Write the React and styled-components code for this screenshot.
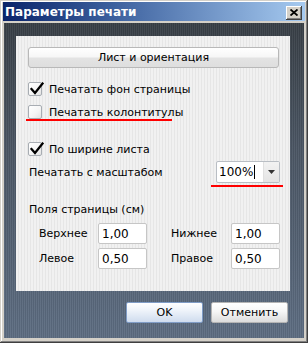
import React from "react";
import styled, { createGlobalStyle } from "styled-components";

const Global = createGlobalStyle`
  html, body { margin: 0; padding: 0; background: #d4d0c8; }
  body { font-family: "DejaVu Sans", Tahoma, sans-serif; font-size: 11px; color: #000; }
`;

const Window = styled.div`
  width: 308px;
  height: 343px;
  box-sizing: border-box;
  background: #d4d0c8;
  padding: 2px 3px 0 3px;
  display: flex;
  flex-direction: column;
  box-shadow: inset -1px -1px 0 #404040, inset 1px 1px 0 #d4d0c8, inset -2px -2px 0 #808080, inset 2px 2px 0 #ffffff;
`;

const TitleBar = styled.div`
  height: 19px;
  flex: none;
  display: flex;
  align-items: center;
  padding-left: 2px;
  padding-right: 3px;
  background: linear-gradient(90deg, #0a246a 0%, #3a5e9c 35%, #a6caf0 100%);
`;

const Title = styled.div`
  flex: 1;
  color: #fff;
  font-weight: bold;
  font-size: 12px;
`;

const CloseBtn = styled.div`
  width: 16px;
  height: 14px;
  box-sizing: border-box;
  margin-top: 2px;
  background: #d4d0c8;
  box-shadow: inset -1px -1px 0 #404040, inset 1px 1px 0 #ffffff, inset -2px -2px 0 #808080;
  display: flex;
  align-items: center;
  justify-content: center;
`;

const Frame = styled.div`
  margin: 2px 1px 0 1px;
  height: 315px;
  box-sizing: border-box;
  padding: 13px 14px 0 12px;
  display: flex;
  flex-direction: column;
  background:
    repeating-linear-gradient(90deg, rgba(255,255,255,0.05) 0 1px, rgba(0,0,0,0.06) 1px 2px),
    linear-gradient(180deg, #383f46 0%, #4b5664 40%, #5d6d82 100%);
`;

const Panel = styled.div`
  height: 255px;
  box-sizing: border-box;
  padding: 11px 11px 0 12px;
  display: flex;
  flex-direction: column;
  background: repeating-linear-gradient(90deg, #f1f1f1 0 2px, #e6e6e6 2px 3px);
`;

const WideButton = styled.div`
  height: 21px;
  box-sizing: border-box;
  border: 1px solid #b8b8b8;
  border-radius: 3px;
  background: linear-gradient(180deg, #ffffff 0%, #f7f7f7 45%, #e3e3e3 55%, #dedede 100%);
  display: flex;
  align-items: center;
  justify-content: center;
`;

const CheckRow = styled.div`
  position: relative;
  height: 16px;
  margin-top: ${(p) => p.$top}px;
  display: flex;
  align-items: center;
  gap: 7px;
`;

const Box = styled.div`
  position: relative;
  width: 14px;
  height: 14px;
  box-sizing: border-box;
  border: 1px solid #a8adb3;
  border-radius: 2px;
  background: linear-gradient(135deg, #ffffff 0%, #f4f4f4 60%, #e2e2e2 100%);
  flex: none;
`;

const Tick = styled.svg`
  position: absolute;
  left: 1px;
  top: -1px;
`;

const RedLine = styled.div`
  position: absolute;
  height: 2px;
  background: #ff0000;
  left: ${(p) => p.$left}px;
  width: ${(p) => p.$width}px;
  top: ${(p) => p.$top}px;
`;

const ScaleRow = styled.div`
  position: relative;
  margin-top: 4px;
  height: 22px;
  display: flex;
  align-items: center;
  justify-content: space-between;
  padding-left: 1px;
`;

const Combo = styled.div`
  width: 64px;
  height: 22px;
  box-sizing: border-box;
  border: 1px solid #b9bec4;
  border-radius: 2px;
  background: #fff;
  display: flex;
  margin-right: -1px;
`;

const ComboText = styled.div`
  flex: 1;
  display: flex;
  align-items: center;
  padding-left: 2px;
  font-size: 12px;
`;

const Caret = styled.span`
  display: inline-block;
  width: 1px;
  height: 14px;
  background: #000;
  margin-left: 1px;
`;

const ComboArrow = styled.div`
  width: 15px;
  background: linear-gradient(180deg, #f2f2f2 0%, #e4e4e4 100%);
  border-left: 1px solid #e0e0e0;
  display: flex;
  align-items: center;
  justify-content: center;
`;

const Label = styled.div`
  height: 16px;
  display: flex;
  align-items: center;
  margin-top: ${(p) => p.$top || 0}px;
  padding-left: 1px;
`;

const Grid = styled.div`
  display: grid;
  grid-template-columns: 59px 49px 24px 60px 49px;
  grid-auto-rows: 21px;
  row-gap: 4px;
  margin-top: 6px;
  padding-left: 11px;
  align-items: center;
`;

const FieldLabel = styled.div`
  grid-column: ${(p) => p.$col};
`;

const Field = styled.div`
  grid-column: ${(p) => p.$col};
  height: 21px;
  box-sizing: border-box;
  border: 1px solid #c6c6c6;
  border-radius: 2px;
  background: #fff;
  display: flex;
  align-items: center;
  padding-left: 3px;
  font-size: 12px;
`;

const Footer = styled.div`
  margin-top: 11px;
  display: flex;
  justify-content: flex-end;
  gap: 8px;
  margin-right: 2px;
`;

const DlgButton = styled.div`
  width: 77px;
  height: 21px;
  box-sizing: border-box;
  border: 1px solid ${(p) => (p.$default ? "#7f9cc6" : "#b4b4b4")};
  border-radius: 2px;
  background: ${(p) =>
    p.$default
      ? "linear-gradient(180deg, #ffffff 0%, #eef3fa 40%, #cfdcee 100%)"
      : "linear-gradient(180deg, #ffffff 0%, #f6f6f6 45%, #dcdcdc 100%)"};
  display: flex;
  align-items: center;
  justify-content: center;
`;

const TickIcon = () => (
  <Tick width="14" height="14" viewBox="0 0 14 14">
    <path d="M1.5 7 L5 11 L12.5 1.5" fill="none" stroke="#000" strokeWidth="2.2" strokeLinecap="square" strokeLinejoin="miter" />
  </Tick>
);

const Check = ({ checked, top, children, underline }) => (
  <CheckRow $top={top}>
    <Box>{checked && <TickIcon />}</Box>
    <span>{children}</span>
    {underline && <RedLine $left={-2} $width={146} $top={15} />}
  </CheckRow>
);

export default function App() {
  return (
    <>
      <Global />
      <Window>
        <TitleBar>
          <Title>Параметры печати</Title>
          <CloseBtn>
            <svg width="8" height="7" viewBox="0 0 8 7">
              <path d="M0.5 0.5 L7.5 6.5 M7.5 0.5 L0.5 6.5" stroke="#000" strokeWidth="1.8" />
            </svg>
          </CloseBtn>
        </TitleBar>
        <Frame>
          <Panel>
            <WideButton>Лист и ориентация</WideButton>
            <Check checked top={13}>Печатать фон страницы</Check>
            <Check top={7} underline>Печатать колонтитулы</Check>
            <Check checked top={21}>По ширине листа</Check>
            <ScaleRow>
              <span>Печатать с масштабом</span>
              <Combo>
                <ComboText>
                  100%<Caret />
                </ComboText>
                <ComboArrow>
                  <svg width="7" height="4" viewBox="0 0 7 4">
                    <path d="M0 0 H7 L3.5 4 Z" fill="#333" />
                  </svg>
                </ComboArrow>
              </Combo>
              <RedLine $left={183} $width={72} $top={24} />
            </ScaleRow>
            <Label $top={18}>Поля страницы (см)</Label>
            <Grid>
              <FieldLabel $col={1}>Верхнее</FieldLabel>
              <Field $col={2}>1,00</Field>
              <FieldLabel $col={4}>Нижнее</FieldLabel>
              <Field $col={5}>1,00</Field>
              <FieldLabel $col={1}>Левое</FieldLabel>
              <Field $col={2}>0,50</Field>
              <FieldLabel $col={4}>Правое</FieldLabel>
              <Field $col={5}>0,50</Field>
            </Grid>
          </Panel>
          <Footer>
            <DlgButton $default>OK</DlgButton>
            <DlgButton>Отменить</DlgButton>
          </Footer>
        </Frame>
      </Window>
    </>
  );
}
